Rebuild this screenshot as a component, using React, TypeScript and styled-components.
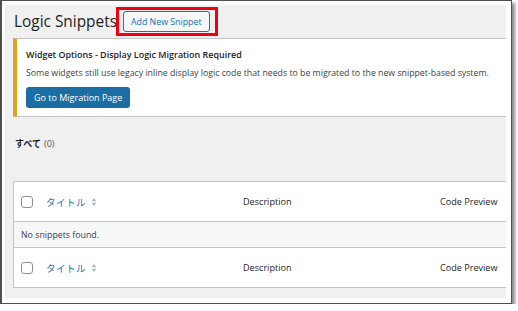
import React from 'react';
import styled, { createGlobalStyle } from 'styled-components';

const GlobalStyle = createGlobalStyle`
  html, body {
    margin: 0;
    padding: 0;
    background: #ffffff;
  }
  body {
    font-family: "Open Sans", "Noto Sans CJK JP", sans-serif;
    color: #3c434a;
  }
`;

const Frame = styled.div`
  width: 501px;
  height: 293px;
  padding: 4px 5px 5px 3px;
  background: #ffffff;
  border: 1px solid #4f4f4f;
  border-left-width: 2px;
  box-shadow: 3px 3px 3px rgba(0, 0, 0, 0.45);
`;

const Screen = styled.div`
  width: 501px;
  height: 293px;
  background: #f0f0f1;
  overflow: hidden;
`;

const Content = styled.div`
  width: 520px;
  padding-left: 8px;
  display: flex;
  flex-direction: column;
`;

const Header = styled.div`
  height: 33px;
  display: flex;
  align-items: center;
`;

const Title = styled.h1`
  margin: 0 0 0 1px;
  font-size: 15.4px;
  font-weight: 400;
  color: #1d2327;
`;

const Highlight = styled.span`
  display: inline-flex;
  margin-left: -1px;
  padding: 1px 5px 1px 4px;
  border: 3px solid #f00010;
`;

const OutlineButton = styled.span`
  display: inline-flex;
  align-items: center;
  height: 19px;
  padding: 0 7px;
  border: 1px solid #2271b1;
  border-radius: 3px;
  background: #f6f7f7;
  color: #2271b1;
  font-size: 8.8px;
  white-space: nowrap;
`;

const Notice = styled.div`
  box-sizing: border-box;
  height: 79px;
  background: #ffffff;
  border: 1px solid #c3c4c7;
  border-left: 4px solid #dba617;
  padding: 9px 9px 0 9px;
  display: flex;
  flex-direction: column;
`;

const NoticeTitle = styled.p`
  margin: 0;
  font-size: 8.95px;
  font-weight: 600;
  color: #1d2327;
  white-space: nowrap;
`;

const NoticeText = styled.p`
  margin: 6px 0 0;
  font-size: 8.75px;
  color: #3c434a;
  white-space: nowrap;
`;

const PrimaryButton = styled.span`
  align-self: flex-start;
  display: inline-flex;
  align-items: center;
  height: 21px;
  margin-top: 8px;
  padding: 0 8px;
  border-radius: 3px;
  background: #1a6ea3;
  color: #ffffff;
  font-size: 9px;
  white-space: nowrap;
`;

const Views = styled.div`
  margin: 21px 0 0 2px;
  height: 10px;
  display: flex;
  align-items: center;
  gap: 3px;
  font-size: 9px;
`;

const ViewName = styled.span`
  font-weight: 700;
  color: #1d2327;
`;

const ViewCount = styled.span`
  color: #50575e;
`;

const Table = styled.div`
  margin-top: 33px;
  background: #ffffff;
  border: 1px solid #c3c4c7;
  display: flex;
  flex-direction: column;
`;

const HeadRow = styled.div<{ $foot?: boolean }>`
  height: 39px;
  display: grid;
  grid-template-columns: 32px 197px 197px 1fr;
  align-items: center;
  font-size: 9.1px;
  border-bottom: ${p => (p.$foot ? 'none' : '1px solid #c3c4c7')};
  border-top: ${p => (p.$foot ? '1px solid #c3c4c7' : 'none')};
`;

const CheckCell = styled.div`
  display: flex;
  padding-left: 7px;
`;

const Checkbox = styled.span`
  box-sizing: border-box;
  width: 12px;
  height: 12px;
  border: 1px solid #8c8f94;
  border-radius: 3px;
  background: #ffffff;
`;

const SortLink = styled.span`
  display: inline-flex;
  align-items: center;
  gap: 5px;
  color: #2271b1;
  font-family: "Noto Sans CJK JP", sans-serif;
  font-size: 9.5px;
  letter-spacing: 0.5px;
`;

const HeadText = styled.span`
  color: #1d2327;
`;

const EmptyRow = styled.div`
  height: 25px;
  display: flex;
  align-items: center;
  padding-left: 7px;
  background: #f6f7f7;
  font-size: 8.8px;
  color: #3c434a;
`;

const SortIcon = () => (
  <svg width="6" height="10" viewBox="0 0 6 10">
    <path d="M3 1 L5.4 4.2 H0.6 Z" fill="#b4b7ba" />
    <path d="M3 9 L5.4 5.8 H0.6 Z" fill="#b4b7ba" />
  </svg>
);

const ColumnRow = ({ foot }: { foot?: boolean }) => (
  <HeadRow $foot={foot}>
    <CheckCell>
      <Checkbox />
    </CheckCell>
    <div>
      <SortLink>
        タイトル
        <SortIcon />
      </SortLink>
    </div>
    <HeadText>Description</HeadText>
    <HeadText>Code Preview</HeadText>
  </HeadRow>
);

export default function App() {
  return (
    <>
      <GlobalStyle />
      <Frame>
        <Screen>
          <Content>
            <Header>
              <Title>Logic Snippets</Title>
              <Highlight>
                <OutlineButton>Add New Snippet</OutlineButton>
              </Highlight>
            </Header>
            <Notice>
              <NoticeTitle>Widget Options - Display Logic Migration Required</NoticeTitle>
              <NoticeText>
                Some widgets still use legacy inline display logic code that needs to be migrated to the new snippet-based system.
              </NoticeText>
              <PrimaryButton>Go to Migration Page</PrimaryButton>
            </Notice>
            <Views>
              <ViewName>すべて</ViewName>
              <ViewCount>(0)</ViewCount>
            </Views>
            <Table>
              <ColumnRow />
              <EmptyRow>No snippets found.</EmptyRow>
              <ColumnRow foot />
            </Table>
          </Content>
        </Screen>
      </Frame>
    </>
  );
}
